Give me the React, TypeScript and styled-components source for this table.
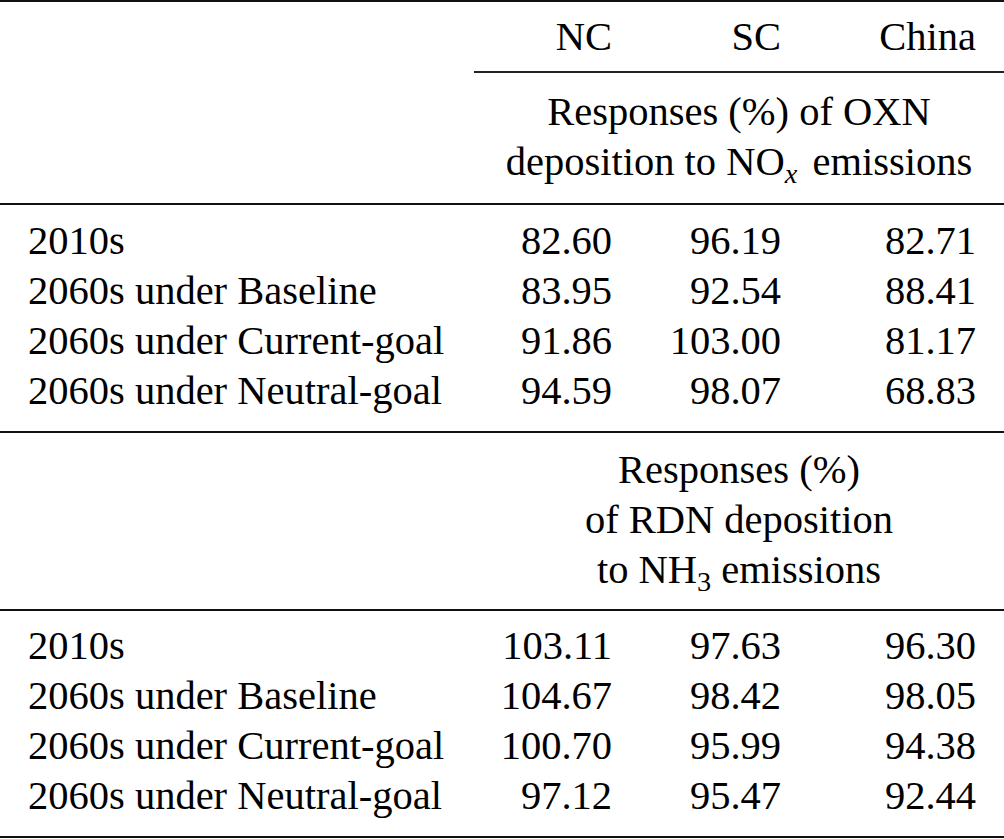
import React from 'react'
import styled, { createGlobalStyle } from 'styled-components'

const GlobalStyle = createGlobalStyle`
  html, body {
    margin: 0;
    padding: 0;
    background: #fff;
  }
  body {
    font-family: 'Liberation Serif', 'Times New Roman', serif;
    color: #000;
  }
`

const COLS = '474px 166px 169px 195px'

const Table = styled.div`
  width: 1004px;
  border-top: 2px solid #111;
  border-bottom: 2px solid #111;
  font-size: 40.5px;
  line-height: 50px;
`

const Block = styled.div<{ $pt: number; $pb: number; $rule?: boolean }>`
  display: grid;
  grid-template-columns: ${COLS};
  padding: ${p => p.$pt}px 0 ${p => p.$pb}px;
  border-top: ${p => (p.$rule ? '2px solid #111' : 'none')};
`

const Label = styled.div`
  grid-column: 1;
  padding-left: 28px;
  white-space: nowrap;
`

const Num = styled.div`
  padding-right: 28px;
  text-align: right;
  white-space: nowrap;
`

const Span = styled.div`
  grid-column: 2 / 5;
  padding: 0 28px;
  text-align: center;
  white-space: nowrap;
`

const CMidRule = styled.div`
  grid-column: 2 / 5;
  height: 2px;
  margin-top: 9px;
  background: #222;
`

const Sub = styled.sub<{ $italic?: boolean }>`
  font-size: 0.7em;
  line-height: 0;
  vertical-align: -0.28em;
  margin-right: ${p => (p.$italic ? '5px' : '0')};
  font-style: ${p => (p.$italic ? 'italic' : 'normal')};
`

type Row = [string, string, string, string]

const oxn: Row[] = [
  ['2010s', '82.60', '96.19', '82.71'],
  ['2060s under Baseline', '83.95', '92.54', '88.41'],
  ['2060s under Current-goal', '91.86', '103.00', '81.17'],
  ['2060s under Neutral-goal', '94.59', '98.07', '68.83'],
]

const rdn: Row[] = [
  ['2010s', '103.11', '97.63', '96.30'],
  ['2060s under Baseline', '104.67', '98.42', '98.05'],
  ['2060s under Current-goal', '100.70', '95.99', '94.38'],
  ['2060s under Neutral-goal', '97.12', '95.47', '92.44'],
]

function Rows({ data }: { data: Row[] }) {
  return (
    <>
      {data.map(r => (
        <React.Fragment key={r[0]}>
          <Label>{r[0]}</Label>
          <Num>{r[1]}</Num>
          <Num>{r[2]}</Num>
          <Num>{r[3]}</Num>
        </React.Fragment>
      ))}
    </>
  )
}

function App() {
  return (
    <>
      <GlobalStyle />
      <Table>
        <Block $pt={10} $pb={0}>
          <Label />
          <Num>NC</Num>
          <Num>SC</Num>
          <Num>China</Num>
          <CMidRule />
        </Block>
        <Block $pt={14} $pb={16}>
          <Span>Responses (%) of OXN</Span>
          <Span>
            deposition to NO<Sub $italic>x</Sub> emissions
          </Span>
        </Block>
        <Block $pt={11} $pb={15} $rule>
          <Rows data={oxn} />
        </Block>
        <Block $pt={12} $pb={14} $rule>
          <Span>Responses (%)</Span>
          <Span>of RDN deposition</Span>
          <Span>
            to NH<Sub>3</Sub> emissions
          </Span>
        </Block>
        <Block $pt={10} $pb={15} $rule>
          <Rows data={rdn} />
        </Block>
      </Table>
    </>
  )
}

export default App
